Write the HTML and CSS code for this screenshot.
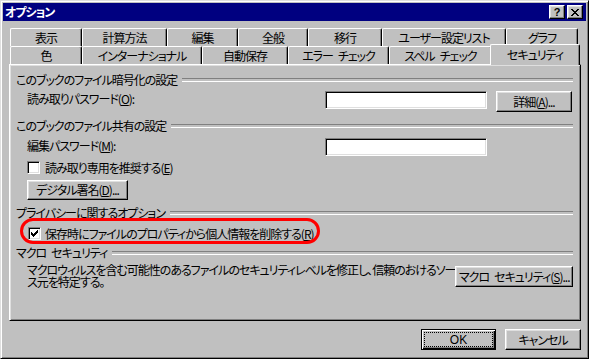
FILE: index.html
```html
<!DOCTYPE html>
<html lang="ja">
<head>
<meta charset="utf-8">
<title>オプション</title>
<link rel="stylesheet" href="styles.css">
</head>
<body>
<div class="dialog">
  <div class="titlebar">
    <span class="title">オプション</span>
    <div class="caption-btns">
      <span class="cap cap-help">?</span>
      <span class="cap cap-close">
        <svg width="8" height="7" viewBox="0 0 8 7"><path d="M0 0h2v1h1v1h2V1h1V0h2v1H7v1H6v1H5v1h1v1h1v1h1v1H6V6H5V5H3v1H2v1H0V6h1V5h1V4h1V3H2V2H1V1H0z" fill="#000"/></svg>
      </span>
    </div>
  </div>

  <div class="tabs">
    <div class="tabrow back">
      <div class="tab w72">表示</div>
      <div class="tab w85">計算方法</div>
      <div class="tab w71">編集</div>
      <div class="tab w70">全般</div>
      <div class="tab w74">移行</div>
      <div class="tab w124">ユーザー設定リスト</div>
      <div class="tab w72">グラフ</div>
    </div>
    <div class="tabrow front">
      <div class="tab w72">色</div>
      <div class="tab w120">インターナショナル</div>
      <div class="tab w86">自動保存</div>
      <div class="tab w101">エラー&ensp;チェック</div>
      <div class="tab w103">スペル&ensp;チェック</div>
      <div class="tab selected">セキュリティ</div>
    </div>
  </div>

  <div class="panel">
    <div class="group g1"><span>このブックのファイル暗号化の設定</span></div>
    <div class="field-row r-open">
      <span class="label">読み取りパスワード(<u>O</u>):</span>
      <span class="textbox"></span>
      <span class="btn btn-detail">詳細(<u>A</u>)...</span>
    </div>
    <div class="group g2"><span>このブックのファイル共有の設定</span></div>
    <div class="field-row r-edit">
      <span class="label">編集パスワード(<u>M</u>):</span>
      <span class="textbox"></span>
    </div>
    <div class="check-row r-ro">
      <span class="checkbox"></span>
      <span class="check-label">読み取り専用を推奨する(<u>E</u>)</span>
    </div>
    <div class="btn-row r-sign">
      <span class="btn btn-sign">デジタル署名(<u>D</u>)...</span>
    </div>
    <div class="group g3"><span>プライバシーに関するオプション</span></div>
    <div class="check-row r-priv">
      <span class="checkbox checked">
        <svg width="7" height="7" viewBox="0 0 7 7"><path d="M6 0h1v3H6v1H5v1H4v1H3v1H2V6H1V5H0V2h1v1h1v1h1V3h1V2h1V1h1z" fill="#000"/></svg>
      </span>
      <span class="check-label">保存時にファイルのプロパティから個人情報を削除する(<u>R</u>)</span>
    </div>
    <div class="group g4"><span>マクロ&ensp;セキュリティ</span></div>
    <div class="macro-row">
      <p class="macro-text">マクロウィルスを含む可能性のあるファイルのセキュリティレベルを修正し、信頼のおけるソー<br>ス元を特定する。</p>
      <span class="btn btn-macro">マクロ&ensp;セキュリティ(<u>S</u>)...</span>
    </div>
  </div>

  <div class="footer">
    <span class="btn btn-ok"><span class="focus">OK</span></span>
    <span class="btn btn-cancel">キャンセル</span>
  </div>

  <div class="highlight"></div>
</div>
</body>
</html>
```

FILE: styles.css
```css
* { box-sizing: border-box; }
html, body { margin: 0; padding: 0; }
body {
  width: 589px;
  height: 359px;
  overflow: hidden;
  background: #c0c0c0;
  font-family: "Noto Sans CJK JP", "Noto Sans", sans-serif;
  font-size: 12px;
  font-feature-settings: "palt";
  letter-spacing: -1px;
  color: #000;
}
u { text-decoration: underline; text-underline-offset: 1px; }

.dialog {
  position: relative;
  width: 589px;
  height: 359px;
  background: #c0c0c0;
  border: 1px solid;
  border-color: #dfdfdf #000 #000 #dfdfdf;
  box-shadow: inset 1px 1px #fff, inset -1px -1px #808080;
  padding: 2px;
  display: flex;
  flex-direction: column;
}

/* title bar */
.titlebar {
  height: 18px;
  background: #000080;
  display: flex;
  align-items: center;
  justify-content: space-between;
  padding: 0 3px 0 2px;
}
.title {
  color: #fff;
  font-weight: bold;
  line-height: 18px;
}
.caption-btns { display: flex; gap: 2px; }
.cap {
  width: 16px;
  height: 14px;
  background: #c0c0c0;
  border: 1px solid;
  border-color: #fff #000 #000 #fff;
  box-shadow: inset -1px -1px #808080, inset 1px 1px #dfdfdf;
  display: flex;
  align-items: center;
  justify-content: center;
  font-family: "Liberation Sans", sans-serif;
  font-weight: bold;
  font-size: 11px;
  line-height: 12px;
  letter-spacing: 0;
}
.cap-close svg { display: block; margin-left: -1px; }

/* tabs */
.tabs {
  margin: 7px 0 0 7px;
  width: 568px;
  display: flex;
  flex-direction: column;
}
.tabrow {
  display: flex;
  height: 18px;
  align-items: flex-end;
}
.tab {
  height: 18px;
  line-height: 17px;
  text-align: center;
  white-space: nowrap;
  background: #c0c0c0;
  border-top: 1px solid #fff;
  border-left: 1px solid #fff;
  border-right: 1px solid #000;
  border-top-left-radius: 2px;
  border-top-right-radius: 2px;
  box-shadow: inset -1px 0 #808080;
}
.w70 { width: 70px; }
.w71 { width: 71px; }
.w72 { width: 72px; }
.w74 { width: 74px; }
.w85 { width: 85px; }
.w86 { width: 86px; }
.w101 { width: 101px; }
.w103 { width: 103px; }
.w120 { width: 120px; }
.w124 { width: 124px; }
.tab.selected {
  position: relative;
  z-index: 1;
  width: 90px;
  height: 21px;
  line-height: 19px;
  margin: 0 -2px -1px -2px;
}

/* panel */
.panel {
  margin-left: 6px;
  width: 572px;
  height: 257px;
  border: 1px solid;
  border-color: #fff #000 #000 #fff;
  box-shadow: inset 1px 1px #dfdfdf, inset -1px -1px #808080;
  padding: 0 7px 0 6px;
  display: flex;
  flex-direction: column;
}

.group {
  display: flex;
  align-items: center;
  gap: 5px;
  height: 14px;
  line-height: 14px;
  white-space: nowrap;
}
.group::after {
  content: "";
  flex: 1;
  height: 2px;
  border-top: 1px solid #808080;
  border-bottom: 1px solid #fff;
}
.g1 { margin-top: 8px; }
.g2 { margin-top: 7px; }
.g3 { margin-top: 6px; }
.g4 { margin-top: 6px; }

.field-row {
  display: flex;
  align-items: flex-start;
  margin-left: 11px;
}
.r-open { margin-top: 4px; height: 21px; }
.r-edit { margin-top: 5px; height: 18px; }
.label {
  width: 298px;
  line-height: 16px;
}
.textbox {
  width: 162px;
  height: 18px;
  background: #fff;
  border: 1px solid;
  border-color: #808080 #fff #fff #808080;
  box-shadow: inset 1px 1px #000, inset -1px -1px #dfdfdf;
}

.btn {
  display: flex;
  align-items: center;
  justify-content: center;
  height: 21px;
  background: #c0c0c0;
  border: 1px solid;
  border-color: #fff #000 #000 #fff;
  box-shadow: inset -1px -1px #808080, inset 1px 1px #dfdfdf;
  white-space: nowrap;
  line-height: 14px;
}
.btn-detail { width: 76px; margin-left: 9px; }

.check-row {
  display: flex;
  align-items: center;
  margin-left: 11px;
  height: 13px;
  gap: 5px;
  white-space: nowrap;
}
.r-ro { margin-top: 5px; }
.r-priv { margin-top: 7px; margin-left: 12px; gap: 4px; }
.checkbox {
  width: 13px;
  height: 13px;
  background: #fff;
  border: 1px solid;
  border-color: #808080 #fff #fff #808080;
  box-shadow: inset 1px 1px #000, inset -1px -1px #dfdfdf;
  display: flex;
  align-items: center;
  justify-content: center;
}
.checkbox svg { display: block; }
.check-label { line-height: 13px; }

.btn-row { margin: 6px 0 0 11px; display: flex; }
.btn-sign { width: 101px; height: 20px; }

.macro-row {
  display: flex;
  justify-content: space-between;
  align-items: flex-start;
  margin: 4px 0 0 11px;
}
.macro-text {
  margin: 0;
  line-height: 12px;
  white-space: nowrap;
}
.btn-macro { width: 121px; margin-top: 2px; }

/* footer */
.footer {
  display: flex;
  justify-content: flex-end;
  gap: 9px;
  margin-top: 8px;
  padding-right: 5px;
}
.btn-ok {
  width: 75px;
  border: 1px solid #000;
  box-shadow: inset 1px 1px #fff, inset -1px -1px #000, inset -2px -2px #808080;
  padding: 3px;
}
.focus {
  flex: 1;
  align-self: stretch;
  display: flex;
  align-items: center;
  justify-content: center;
  outline: 1px dotted #000;
  outline-offset: 0;
  font-family: "Liberation Sans", sans-serif;
  font-size: 12px;
  letter-spacing: 0;
}
.btn-cancel { width: 76px; }

/* red annotation ring */
.highlight {
  position: absolute;
  left: 19px;
  top: 217px;
  width: 300px;
  height: 26px;
  border: 3px solid #ff0000;
  border-radius: 13px;
  pointer-events: none;
}
```
